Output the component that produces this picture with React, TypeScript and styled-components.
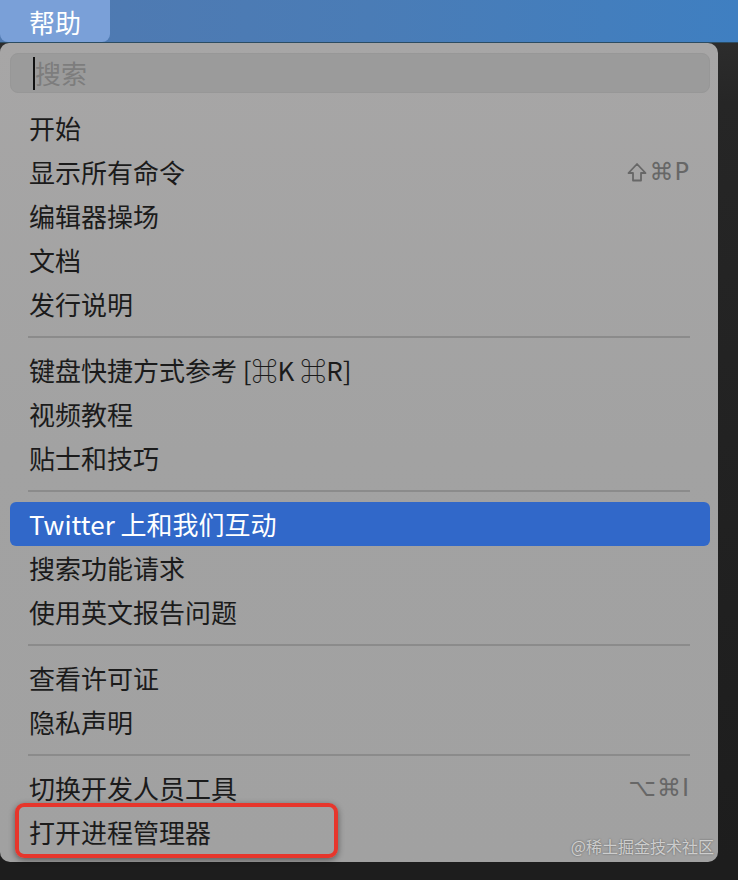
import React from 'react'
import styled, { createGlobalStyle } from 'styled-components'

type Entry =
  | { kind: 'item'; label: string; shortcut?: string; shift?: boolean; active?: boolean; marked?: boolean }
  | { kind: 'sep' }

const entries: Entry[] = [
  { kind: 'item', label: '开始' },
  { kind: 'item', label: '显示所有命令', shortcut: '⌘P', shift: true },
  { kind: 'item', label: '编辑器操场' },
  { kind: 'item', label: '文档' },
  { kind: 'item', label: '发行说明' },
  { kind: 'sep' },
  { kind: 'item', label: '键盘快捷方式参考 [⌘K ⌘R]' },
  { kind: 'item', label: '视频教程' },
  { kind: 'item', label: '贴士和技巧' },
  { kind: 'sep' },
  { kind: 'item', label: 'Twitter 上和我们互动', active: true },
  { kind: 'item', label: '搜索功能请求' },
  { kind: 'item', label: '使用英文报告问题' },
  { kind: 'sep' },
  { kind: 'item', label: '查看许可证' },
  { kind: 'item', label: '隐私声明' },
  { kind: 'sep' },
  { kind: 'item', label: '切换开发人员工具', shortcut: '⌥⌘I' },
  { kind: 'item', label: '打开进程管理器', marked: true },
]

function ShiftIcon(): JSX.Element {
  return (
    <svg width="20" height="20" viewBox="0 0 20 20" fill="none">
      <path
        d="M10 2 L18.5 11 H14 V18.5 H6 V11 H1.5 Z"
        stroke="#676767"
        strokeWidth="1.8"
        strokeLinejoin="round"
      />
    </svg>
  )
}

function App(): JSX.Element {
  return (
    <Screen>
      <GlobalStyle />
      <MenuBar>
        <MenuTab>帮助</MenuTab>
      </MenuBar>
      <Backdrop>
        <Panel>
          <SearchBox>
            <Caret />
            <Placeholder>搜索</Placeholder>
          </SearchBox>
          {entries.map((entry, i) =>
            entry.kind === 'sep' ? (
              <Separator key={i} />
            ) : (
              <Item key={i} $active={entry.active}>
                <Label>{entry.label}</Label>
                {entry.shortcut && (
                  <Shortcut>
                    {entry.shift && <ShiftIcon />}
                    {entry.shortcut}
                  </Shortcut>
                )}
                {entry.marked && <RedFrame />}
              </Item>
            )
          )}
          <Watermark>@稀土掘金技术社区</Watermark>
        </Panel>
      </Backdrop>
    </Screen>
  )
}

export default App

const GlobalStyle = createGlobalStyle`
  html, body {
    margin: 0;
    padding: 0;
    background: #1d1d1d;
  }
`

const Screen = styled.div`
  width: 738px;
  height: 880px;
  overflow: hidden;
  background: #1d1d1d;
  font-family: 'Noto Sans CJK SC', 'Noto Sans', sans-serif;
`

const MenuBar = styled.div`
  height: 42px;
  display: flex;
  background: linear-gradient(90deg, #5079b0 0%, #4a7cb6 50%, #3f7fc1 100%);
  border-bottom: 1px solid #2c4c62;
`

const MenuTab = styled.div`
  width: 110px;
  height: 42px;
  padding-left: 29px;
  box-sizing: border-box;
  display: flex;
  align-items: center;
  background: #7aa0d8;
  border-radius: 0 0 8px 8px;
  color: #ffffff;
  font-size: 26px;
`

const Backdrop = styled.div`
  display: flex;
  background: linear-gradient(180deg, #2c2c2c 0px, #262626 60px, #1d1d1d 100%);
`

const Panel = styled.div`
  position: relative;
  width: 718px;
  padding: 10px 8px 8px 10px;
  box-sizing: border-box;
  display: flex;
  flex-direction: column;
  background: linear-gradient(180deg, #a7a6a6 0%, #a2a2a2 50%, #a1a1a1 100%);
  border-radius: 9px 10px 10px 10px;
`

const SearchBox = styled.div`
  height: 40px;
  margin-bottom: 13px;
  padding-left: 22px;
  display: flex;
  align-items: center;
  background: #9b9b9b;
  border: 1px solid #979797;
  box-sizing: border-box;
  border-radius: 8px;
`

const Caret = styled.span`
  width: 2px;
  height: 33px;
  background: #111111;
`

const Placeholder = styled.span`
  color: #7d7d7d;
  font-size: 26px;
  line-height: 1;
`

const Item = styled.div<{ $active?: boolean }>`
  position: relative;
  height: 44px;
  padding: 0 20px 0 19px;
  display: flex;
  align-items: center;
  justify-content: space-between;
  border-radius: 6px;
  background: ${(p) => (p.$active ? '#3168c9' : 'transparent')};
  color: ${(p) => (p.$active ? '#ffffff' : '#1b1b1b')};
`

const Label = styled.span`
  font-size: 26px;
  line-height: 1;
  white-space: nowrap;
`

const Shortcut = styled.span`
  display: flex;
  align-items: center;
  gap: 3px;
  color: #676767;
  font-family: 'DejaVu Sans', sans-serif;
  font-size: 24px;
  letter-spacing: 1px;
`

const Separator = styled.div`
  height: 22px;
  margin: 0 20px 0 18px;
  display: flex;
  align-items: center;

  &::before {
    content: '';
    flex: 1;
    height: 2px;
    background: #8b8b8b;
  }
`

const RedFrame = styled.div`
  position: absolute;
  left: 5px;
  top: -7px;
  width: 323px;
  height: 55px;
  box-sizing: border-box;
  border: 4px solid #e6362c;
  border-radius: 9px;
  box-shadow: 0 2px 6px rgba(0, 0, 0, 0.45);
`

const Watermark = styled.div`
  position: absolute;
  right: 4px;
  bottom: 4px;
  color: rgba(235, 235, 235, 0.75);
  font-size: 16px;
  text-shadow: 0 0 2px rgba(0, 0, 0, 0.45);
`
